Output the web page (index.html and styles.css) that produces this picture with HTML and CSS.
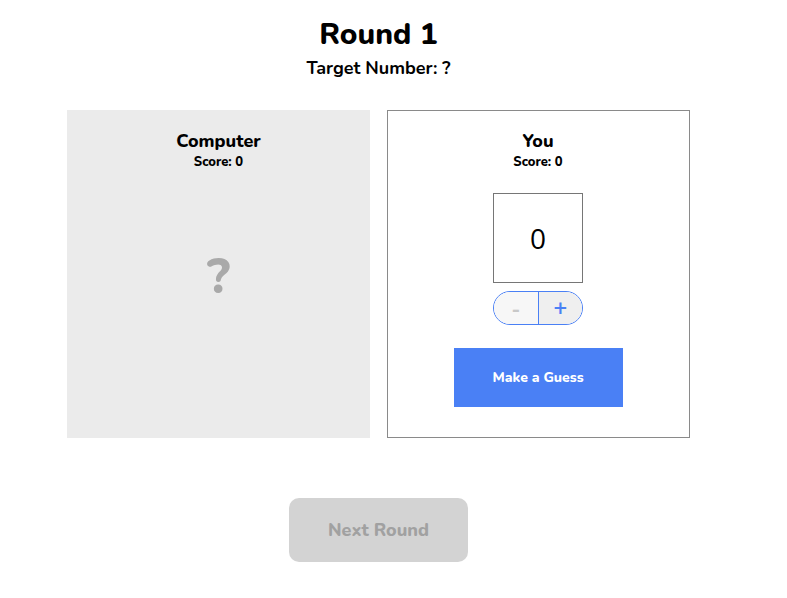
FILE: index.html
```html
<!DOCTYPE html>
<html>
<head>
<meta charset="utf-8">
<link rel="stylesheet" href="styles.css">
</head>
<body>
<div class="app">
  <h1 class="title">Round 1</h1>
  <p class="target">Target Number: ?</p>
  <div class="cards">
    <div class="card computer">
      <div class="name">Computer</div>
      <div class="score">Score: 0</div>
      <div class="mystery">?</div>
    </div>
    <div class="card you">
      <div class="name">You</div>
      <div class="score">Score: 0</div>
      <div class="guess-box">0</div>
      <div class="stepper">
        <button class="step minus">-</button>
        <button class="step plus">+</button>
      </div>
      <button class="guess-btn">Make a Guess</button>
    </div>
  </div>
  <div class="next-wrap">
    <button class="next-btn">Next Round</button>
  </div>
</div>
</body>
</html>
```
FILE: styles.css
```css
html, body {
  margin: 0;
  padding: 0;
  background: #fff;
}
body {
  font-family: "Nunito", "Lato", "Noto Sans", sans-serif;
  color: #000;
}
.app {
  width: 757px;
  display: flex;
  flex-direction: column;
  align-items: center;
  padding-top: 16px;
}
.title {
  margin: 0;
  font-size: 30px;
  font-weight: 800;
  line-height: 38px;
}
.target {
  margin: 3px 0 0;
  font-size: 18px;
  font-weight: 700;
  line-height: 22px;
}
.cards {
  display: flex;
  gap: 17px;
  margin-top: 31px;
}
.card {
  width: 303px;
  height: 328px;
  box-sizing: border-box;
  display: flex;
  flex-direction: column;
  align-items: center;
  padding-top: 20px;
}
.computer {
  background: #ebebeb;
}
.you {
  border: 1px solid #8a8a8a;
  padding-top: 19px;
  padding-right: 1px;
}
.name {
  font-size: 18px;
  font-weight: 800;
  line-height: 22px;
}
.score {
  font-size: 13px;
  font-weight: 800;
  line-height: 18px;
  margin-top: 1px;
}
.mystery {
  flex: 1;
  display: flex;
  align-items: center;
  justify-content: center;
  font-size: 50px;
  font-weight: 800;
  color: #a9a9a9;
  padding-bottom: 56px;
}
.guess-box {
  width: 90px;
  height: 90px;
  box-sizing: border-box;
  border: 1px solid #767676;
  margin-top: 22px;
  display: flex;
  align-items: center;
  justify-content: center;
  font-family: "Open Sans", "Noto Sans", sans-serif;
  font-size: 28px;
  font-weight: 400;
}
.stepper {
  margin-top: 8px;
  width: 90px;
  height: 34px;
  box-sizing: border-box;
  border: 1px solid #4a80f5;
  border-radius: 17px;
  overflow: hidden;
  display: flex;
}
.step {
  flex: 1;
  border: none;
  margin: 0;
  padding: 0;
  font-family: "Open Sans", "Noto Sans", sans-serif;
  font-size: 24px;
  font-weight: 600;
  line-height: 1;
}
.minus {
  background: #f7f7f7;
  color: #c8c8c8;
  border-right: 1px solid #4a80f5;
}
.plus {
  background: #efefef;
  color: #4a80f5;
}
.guess-btn {
  margin-top: 23px;
  width: 169px;
  height: 59px;
  border: none;
  background: #4a80f5;
  color: #fff;
  font-family: "Nunito", "Lato", "Noto Sans", sans-serif;
  font-size: 14px;
  font-weight: 800;
}
.next-wrap {
  margin-top: 60px;
}
.next-btn {
  width: 179px;
  height: 64px;
  border: none;
  border-radius: 10px;
  background: #d3d3d3;
  color: #a1a1a1;
  font-family: "Nunito", "Lato", "Noto Sans", sans-serif;
  font-size: 18px;
  font-weight: 800;
}
```
